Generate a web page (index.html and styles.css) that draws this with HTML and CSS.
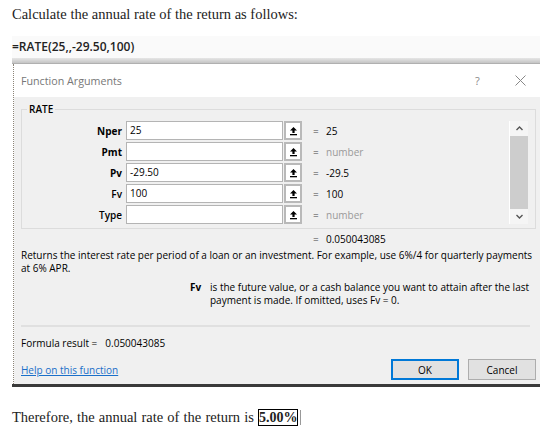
FILE: index.html
```html
<!DOCTYPE html>
<html>
<head>
    <title>RATE - Function Arguments</title>
    <link rel="stylesheet" href="styles.css">
</head>
<body>
    <p class="intro">Calculate the annual rate of the return as follows:</p>

    <div class="shot">
        <div class="formula-bar">=RATE(25,,-29.50,100)</div>
        <div class="bar-edge"></div>

        <div class="dialog">
            <div class="titlebar">
                <span class="title">Function Arguments</span>
                <span class="help">?</span>
                <span class="close">
                    <svg width="11" height="11" viewBox="0 0 11 11"><path d="M0.5 0.5L10.5 10.5M10.5 0.5L0.5 10.5" stroke="#888" stroke-width="1"/></svg>
                </span>
            </div>

            <div class="dialog-body">
                <div class="group">
                    <span class="legend">RATE</span>
                    <div class="group-inner">
                        <div class="args">
                            <label>Nper</label>
                            <div class="field">25</div>
                            <div class="ref"><svg width="9" height="10" viewBox="0 0 9 10"><path d="M4.5 1L1 4.6h2.4V7h2.2V4.6H8z" fill="#000"/><rect x="1" y="8" width="7" height="1.3" fill="#000"/></svg></div>
                            <div class="value"><span class="eq">=</span>25</div>

                            <label>Pmt</label>
                            <div class="field"></div>
                            <div class="ref"><svg width="9" height="10" viewBox="0 0 9 10"><path d="M4.5 1L1 4.6h2.4V7h2.2V4.6H8z" fill="#000"/><rect x="1" y="8" width="7" height="1.3" fill="#000"/></svg></div>
                            <div class="value hint"><span class="eq">=</span>number</div>

                            <label>Pv</label>
                            <div class="field">-29.50</div>
                            <div class="ref"><svg width="9" height="10" viewBox="0 0 9 10"><path d="M4.5 1L1 4.6h2.4V7h2.2V4.6H8z" fill="#000"/><rect x="1" y="8" width="7" height="1.3" fill="#000"/></svg></div>
                            <div class="value"><span class="eq">=</span>-29.5</div>

                            <label class="light">Fv</label>
                            <div class="field">100</div>
                            <div class="ref"><svg width="9" height="10" viewBox="0 0 9 10"><path d="M4.5 1L1 4.6h2.4V7h2.2V4.6H8z" fill="#000"/><rect x="1" y="8" width="7" height="1.3" fill="#000"/></svg></div>
                            <div class="value"><span class="eq">=</span>100</div>

                            <label class="light">Type</label>
                            <div class="field"></div>
                            <div class="ref"><svg width="9" height="10" viewBox="0 0 9 10"><path d="M4.5 1L1 4.6h2.4V7h2.2V4.6H8z" fill="#000"/><rect x="1" y="8" width="7" height="1.3" fill="#000"/></svg></div>
                            <div class="value hint"><span class="eq">=</span>number</div>
                        </div>

                        <div class="scrollbar">
                            <svg class="arrow" width="7" height="5" viewBox="0 0 7 5"><path d="M0.5 4L3.5 1L6.5 4" fill="none" stroke="#555" stroke-width="1.4"/></svg>
                            <div class="thumb"></div>
                            <svg class="arrow" width="7" height="5" viewBox="0 0 7 5"><path d="M0.5 1L3.5 4L6.5 1" fill="none" stroke="#555" stroke-width="1.4"/></svg>
                        </div>
                    </div>
                </div>

                <div class="result"><span class="eq">=</span>0.050043085</div>

                <p class="desc">Returns the interest rate per period of a loan or an investment. For example, use 6%/4 for quarterly payments at 6% APR.</p>

                <div class="arg-help">
                    <span class="arg-name">Fv</span>
                    <span class="arg-text">is the future value, or a cash balance you want to attain after the last payment is made. If omitted, uses Fv = 0.</span>
                </div>

                <div class="separator"></div>

                <div class="formula-result">Formula result =<span class="num">0.050043085</span></div>

                <div class="footer">
                    <a href="#" class="help-link">Help on this function</a>
                    <div class="buttons">
                        <button class="btn default">OK</button>
                        <button class="btn">Cancel</button>
                    </div>
                </div>
            </div>
        </div>
        <div class="dark-line"></div>
    </div>

    <p class="outro">Therefore, the annual rate of the return is <span class="answer">5.00%</span><span class="caret"></span></p>
</body>
</html>
```

FILE: styles.css
```css
body {
    margin: 0;
    background: #fff;
    font-family: "Liberation Serif", "Times New Roman", serif;
    color: #222;
}
.intro {
    margin: 0;
    padding: 6px 0 0 12px;
    font-size: 14.5px;
    line-height: 17px;
}
.shot {
    margin: 13px 0 0 12px;
    width: 528px;
    font-family: "Open Sans", "Noto Sans", sans-serif;
}
.formula-bar {
    height: 22px;
    line-height: 22px;
    background: #fafafa;
    font-size: 12px;
    font-weight: 600;
    color: #222;
}
.bar-edge {
    height: 5px;
    background: linear-gradient(#e6e6e6, #c4c4c4);
    border-bottom: 1px solid #b0b0b0;
}
.dialog {
    border-left: 1px dotted #8c8478;
    margin-left: 1px;
}
.titlebar {
    height: 33px;
    background: #fff;
    display: flex;
    align-items: center;
    padding: 0 10px 0 7px;
    color: #777;
}
.title {
    font-size: 10.7px;
    flex: 1;
}
.help {
    font-size: 11px;
    width: 40px;
    color: #888;
}
.close {
    display: flex;
    margin-right: 4px;
}
.dialog-body {
    background: #f0f0f0;
    padding: 12px 4px 4px 7px;
    font-size: 10px;
    color: #000;
}
.group {
    position: relative;
    border: 1px solid #dcdcdc;
    padding: 11px 7px 4px 0;
}
.legend {
    position: absolute;
    top: -7px;
    left: 5px;
    padding: 0 2px;
    background: #f0f0f0;
    font-weight: 600;
    line-height: 12px;
}
.group-inner {
    display: flex;
}
.args {
    flex: 1;
    display: grid;
    grid-template-columns: 104px 157px 19px 1fr;
    grid-auto-rows: 19px;
    row-gap: 2px;
    align-items: center;
}
.args label {
    text-align: right;
    font-weight: 700;
    padding-right: 4px;
}
.args label.light {
    font-weight: 600;
}
.field {
    height: 19px;
    box-sizing: border-box;
    border: 1px solid #b4b4b4;
    background: #fff;
    line-height: 17px;
    padding-left: 3px;
}
.ref {
    height: 19px;
    box-sizing: border-box;
    margin-left: 1px;
    border: 2px solid #b9b9b9;
    background: #fff;
    display: flex;
    align-items: center;
    justify-content: center;
}
.value {
    padding-left: 11px;
}
.eq {
    display: inline-block;
    width: 13px;
    color: #444;
}
.hint {
    color: #9a9a9a;
}
.scrollbar {
    width: 18px;
    height: 103px;
    background: #f5f5f5;
    border-left: 1px solid #fff;
    display: flex;
    flex-direction: column;
    align-items: center;
}
.scrollbar .arrow {
    margin: 5px 0;
}
.thumb {
    width: 100%;
    flex: 1;
    background: #cdcdcd;
}
.result {
    margin: 4px 0 0 292px;
    line-height: 12px;
}
.desc {
    margin: 4px 0 0 0;
    line-height: 12.5px;
}
.arg-help {
    display: flex;
    margin: 7px 0 0 169px;
    line-height: 12.5px;
}
.arg-name {
    font-weight: 700;
    width: 20px;
    flex: none;
}
.separator {
    margin: 19px 6px 0 0;
    border-top: 2px solid #e0e0e0;
}
.formula-result {
    margin-top: 10px;
    line-height: 12px;
}
.formula-result .num {
    margin-left: 8px;
}
.footer {
    display: flex;
    align-items: center;
    justify-content: space-between;
    margin-top: 10px;
}
.help-link {
    color: #1a6fc9;
    text-decoration: underline;
}
.buttons {
    display: flex;
    gap: 9px;
}
.btn {
    width: 68px;
    height: 21px;
    font-family: inherit;
    font-size: 10px;
    background: #e1e1e1;
    border: 1px solid #adadad;
    color: #000;
    padding: 0;
}
.btn.default {
    border: 2px solid #0078d7;
}
.dark-line {
    height: 3px;
    background: #3a3a3a;
}
.outro {
    margin: 22px 0 0 12px;
    font-size: 14.5px;
    line-height: 17px;
    word-spacing: 0.5px;
}
.answer {
    font-weight: 700;
    font-size: 14px;
    border: 1px solid #000;
    padding: 0;
}
.caret {
    display: inline-block;
    width: 1px;
    height: 15px;
    background: #999;
    margin-left: 2px;
    vertical-align: -3px;
}
```
